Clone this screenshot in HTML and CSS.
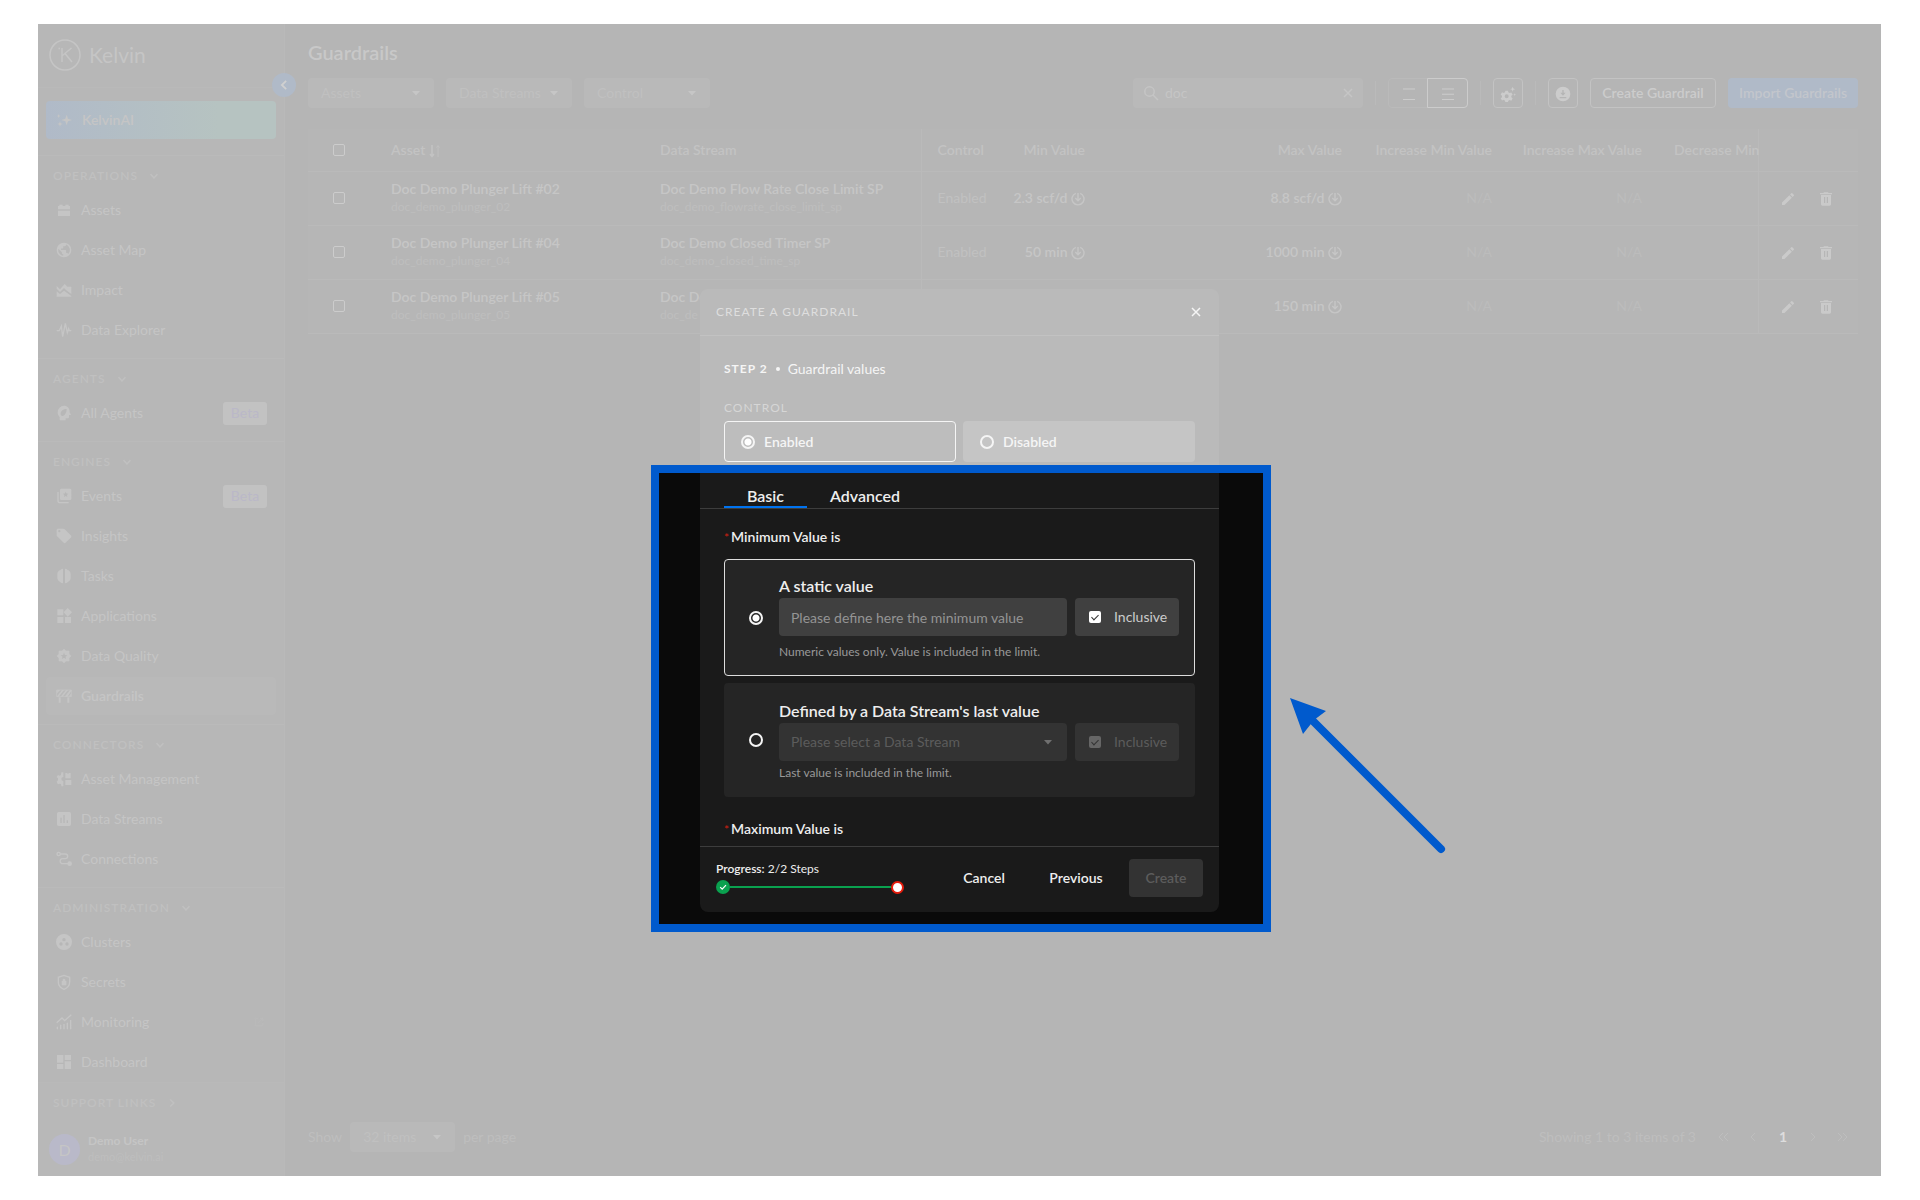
FILE: index.html
```html
<!DOCTYPE html>
<html lang="en">
<head>
    <meta charset="UTF-8">
    <meta name="viewport" content="width=device-width, initial-scale=1.0">
    <title>Guardrails - Kelvin</title>
    <link rel="stylesheet" href="styles.css">
</head>
<body>
    <!-- Shared icons -->
    <svg class="sprite" aria-hidden="true">
        <symbol id="chevron" viewBox="0 0 10 10"><path d="M1.5 3.2 5 6.8 8.500 3.200" fill="none" stroke="currentColor" stroke-width="1.500"/></symbol>
        <symbol id="caret" viewBox="0 0 10 10"><path d="M1 3h8L5 7.500z" fill="currentColor"/></symbol>
        <symbol id="close" viewBox="0 0 10 10"><path d="M1 1l8 8M9 1L1 9" fill="none" stroke="currentColor" stroke-width="1.500"/></symbol>
        <symbol id="down-circle" viewBox="0 0 14 14"><path d="M4.800 1.300a6 6 0 1 0 4.400 0M7 1v7M4.300 6 7 8.700 9.700 6" fill="none" stroke="currentColor" stroke-width="1.400"/></symbol>
        <symbol id="edit" viewBox="0 0 24 24"><path d="M3 17.250V21h3.750L17.810 9.940l-3.750-3.750zM20.710 7.040a1 1 0 0 0 0-1.410l-2.340-2.340a1 1 0 0 0-1.410 0l-1.830 1.830 3.750 3.750z" fill="currentColor"/></symbol>
        <symbol id="trash" viewBox="0 0 24 24"><path fill-rule="evenodd" d="M3 3h5l1-1h6l1 1h5v2H3zM4.500 6h15v14a2 2 0 0 1-2 2h-11a2 2 0 0 1-2-2zM9 9v9h1.800V9zm4.200 0v9H15V9z" fill="currentColor"/></symbol>
    </svg>

    <div class="app">
        <aside class="sidebar">
            <div class="brand">
                <svg class="brand-mark" viewBox="0 0 32 32" fill="none" stroke="currentColor" stroke-width="1.500"><circle cx="16" cy="16" r="15"/><path d="M13 9v14M22.500 9 13.500 16.500M16 14.500l7 8.500M9.500 9.500h1.500"/></svg>
                <span>Kelvin</span>
            </div>
            <button class="collapse" aria-label="Collapse menu"><svg viewBox="0 0 10 10"><use href="#chevron"/></svg></button>
            <div class="promo">
                <a href="#" class="kelvin-ai">
                    <svg viewBox="0 0 24 24" fill="currentColor"><path d="M16 4l2 6 6 2-6 2-2 6-2-6-6-2 6-2zM4 3l.8 2.200L7 6l-2.200.8L4 9l-.8-2.200L1 6l2.200-.8zM6 14l1 3 3 1-3 1-1 3-1-3-3-1 3-1z"/></svg>
                    KelvinAI
                </a>
            </div>
            <nav class="menu">
                <section>
                    <button class="group">Operations <svg><use href="#chevron"/></svg></button>
                    <a href="#"><svg viewBox="0 0 24 24"><path d="M3 11V6h2V4h5v2h4V4h5v2h2v5zM3 13h18v8H3z"/></svg>Assets</a>
                    <a href="#"><svg viewBox="0 0 24 24"><path d="M12 1a11 11 0 1 0 0 22 11 11 0 0 0 0-22zm-1.200 19.700A8.700 8.700 0 0 1 3.600 10l5.200 5.200v1.200c0 1.200 1 2.200 2.200 2.200zm7.600-2.800a2.200 2.200 0 0 0-2.100-1.500h-1.100v-3.300c0-.6-.5-1.100-1.100-1.100H7.500V9.800h2.200c.6 0 1.100-.5 1.100-1.100V6.500H13c1.200 0 2.200-1 2.200-2.200v-.5a8.700 8.700 0 0 1 3.200 14.100z"/></svg>Asset Map</a>
                    <a href="#"><svg viewBox="0 0 24 24"><path d="M1 6l5 5 7-8 4 4h6v11l-8-6-3-3-6 6-5-5zM1 14l5 4 6-5 11 8v1H1z"/></svg>Impact</a>
                    <a href="#"><svg viewBox="0 0 24 24"><path d="M1 13h4l3-7 2 16 4-20 3 14 2-6 1 3h3" class="line"/></svg>Data Explorer</a>
                </section>
                <section>
                    <button class="group">Agents <svg><use href="#chevron"/></svg></button>
                    <a href="#"><svg viewBox="0 0 24 24"><path fill-rule="evenodd" d="M12 1a10 10 0 0 0-9.500 10c0 3 1 5 3 7v5h9v-3h3c1.500 0 2-1 2-2v-3h3l-2-4C21 5 17 1 12 1zm4 5c0 5-2 9-5 10-2 1-4 0-4-3 0-4 4-7 9-7z"/></svg>All Agents <span class="beta">Beta</span></a>
                </section>
                <section>
                    <button class="group">Engines <svg><use href="#chevron"/></svg></button>
                    <a href="#"><svg viewBox="0 0 24 24"><path fill-rule="evenodd" d="M8 1h13a2 2 0 0 1 2 2v13a2 2 0 0 1-2 2H8a2 2 0 0 1-2-2V3c0-1 1-2 2-2zm6.500 4.500-1.200 2.800-3 .2 2.300 2-.7 3 2.600-1.600 2.600 1.600-.7-3 2.300-2-3-.2z"/><path d="M3 6v13c0 2 1 3 3 3h13" class="line"/></svg>Events <span class="beta">Beta</span></a>
                    <a href="#"><svg viewBox="0 0 24 24"><path fill-rule="evenodd" d="M1 3c0-1 1-2 2-2h8c1 0 1.500.3 2 .8l9.500 9.500c.8.8.8 2 0 2.800l-8.200 8.200c-.8.8-2 .8-2.800 0L1.700 12.500c-.5-.5-.7-1-.7-1.500zm4 0a1.700 1.700 0 1 0 0 3.400A1.700 1.700 0 0 0 5 3z"/></svg>Insights</a>
                    <a href="#"><svg viewBox="0 0 24 24"><path d="M10.500 1v22c-3 0-4-2-4-2-3-1-4.500-4-4.500-6V9c0-3 2-5 4.500-6 0 0 1-2 4-2zM13.500 1v22c3 0 4-2 4-2 3-1 4.500-4 4.500-6V9c0-3-2-5-4.500-6 0 0-1-2-4-2z"/></svg>Tasks</a>
                    <a href="#"><svg viewBox="0 0 24 24"><path d="M2 2h9v9H2zM2 13.500h9v9H2zM13.500 13.500h9v9h-9zM17.500 0 24 6.500 17.500 13 11.500 6.500z"/></svg>Applications</a>
                    <a href="#"><svg viewBox="0 0 24 24"><path fill-rule="evenodd" d="M12 1l3 3h5v5l3 3-3 3v5h-5l-3 3-3-3H4v-5l-3-3 3-3V4h5zm0 6-1.400 3.400-3.600.3 2.700 2.300-.8 3.600 3.100-1.900 3.100 1.900-.8-3.600 2.700-2.300-3.600-.3z"/></svg>Data Quality</a>
                    <a href="#" class="active"><svg viewBox="0 0 24 24"><path d="M4 14h3v8H4zM17 14h3v8h-3zM2 3h4l-5 6V4zM9 3h3l-8 10H1zM15 3h3l-8 10H7zM21 3h2v2l-6 8h-4zM23 8v5h-4z"/><path d="M1 3h22v10H1z" class="line thin"/></svg>Guardrails</a>
                </section>
                <section>
                    <button class="group">Connectors <svg><use href="#chevron"/></svg></button>
                    <a href="#"><svg viewBox="0 0 24 24"><path d="M11 2v7a3 3 0 0 0 0 6v8H8l-.5-3-2-1-2.700 1L1 16l2-2v-3L1 9l1.800-3 2.700 1 2-1L8 2zM14 3h3v1h2V3h3v8h-8zM14 13.500h9V21h-9z"/></svg>Asset Management</a>
                    <a href="#"><svg viewBox="0 0 24 24"><path fill-rule="evenodd" d="M4 1.500h16A2.500 2.500 0 0 1 22.500 4v16a2.500 2.500 0 0 1-2.500 2.500H4A2.500 2.500 0 0 1 1.500 20V4A2.500 2.500 0 0 1 4 1.500zM6.500 10v8h2v-8zm4.500-4v12h2V6zm5 8v4h2v-4z"/></svg>Data Streams</a>
                    <a href="#"><svg viewBox="0 0 24 24"><circle cx="4" cy="4.500" r="2.500" class="line"/><circle cx="20.500" cy="19" r="3.500"/><path d="M6.500 4.500H14a3.500 3.500 0 0 1 0 7h-4a3.750 3.750 0 0 0 0 7.500h8" class="line"/></svg>Connections</a>
                </section>
                <section>
                    <button class="group">Administration <svg><use href="#chevron"/></svg></button>
                    <a href="#"><svg viewBox="0 0 24 24"><path fill-rule="evenodd" d="M12 0a12 12 0 1 0 0 24 12 12 0 0 0 0-24zm0 6a2.500 2.500 0 1 1 0 5 2.500 2.500 0 0 1 0-5zm-4.500 6.500a2.500 2.500 0 1 1 0 5 2.500 2.500 0 0 1 0-5zm9 0a2.500 2.500 0 1 1 0 5 2.500 2.500 0 0 1 0-5z"/></svg>Clusters</a>
                    <a href="#"><svg viewBox="0 0 24 24"><path d="M12 2 3.500 5v7c0 5 3.500 9 8.500 11 5-2 8.500-6 8.500-11V5z" class="line"/><path d="M8.500 10.500H10V9a2 2 0 0 1 4 0v1.500h1.500V17h-7z"/></svg>Secrets</a>
                    <a href="#"><svg viewBox="0 0 24 24"><path d="M1 13 9 6l4 4 10-9M2 19v4M7 16v7M12 15v8M17 13v10M22 9v14" class="line"/></svg>Monitoring <svg class="external" viewBox="0 0 24 24"><path d="M10 3H3v18h18v-7M14 3h7v7M21 3 10 14" class="line"/></svg></a>
                    <a href="#"><svg viewBox="0 0 24 24"><path d="M1.500 1.500h9.500V13H1.500zM13 1.500h9.500V9H13zM1.500 15H11v7.500H1.500zM13 11h9.500v11.500H13z"/></svg>Dashboard</a>
                </section>
            </nav>
            <div class="sidebar-footer">
                <button class="group closed">Support Links <svg><use href="#chevron"/></svg></button>
                <div class="user">
                    <span class="avatar">D</span>
                    <div>
                        <p class="user-name">Demo User</p>
                        <p class="user-mail">demo@kelvin.ai</p>
                    </div>
                </div>
            </div>
        </aside>

        <main class="content">
            <h1>Guardrails</h1>
            <div class="toolbar">
                <button class="filter">Assets <svg><use href="#caret"/></svg></button>
                <button class="filter">Data Streams <svg><use href="#caret"/></svg></button>
                <button class="filter">Control <svg><use href="#caret"/></svg></button>
                <label class="search">
                    <svg viewBox="0 0 16 16" fill="none" stroke="currentColor" stroke-width="1.500"><circle cx="6.500" cy="6.500" r="4.700"/><path d="M10 10l5 5"/></svg>
                    <input type="text" value="doc" aria-label="Search">
                    <svg class="clear"><use href="#close"/></svg>
                </label>
                <span class="divider"></span>
                <div class="density">
                    <button aria-label="Comfortable rows"><svg viewBox="0 0 14 14"><path d="M1 2h12M1 12.500h12"/></svg></button>
                    <button class="selected" aria-label="Compact rows"><svg viewBox="0 0 14 14"><path d="M1 2h12M1 7.250h12M1 12.500h12"/></svg></button>
                </div>
                <span class="divider"></span>
                <button class="icon-button" aria-label="Table settings"><svg viewBox="0 0 24 24" fill="currentColor"><path fill-rule="evenodd" d="M8 7h4l.5 2.500 2 1L17 9.600l2 3.400-2 1.800v2l2 1.700-2 3.500-2.500-1-2 1.200L12 24H8l-.5-2-2-1.200-2.500 1-2-3.500 2-1.600v-2L1 13l2-3.500 2.500 1 2-1zm2 5.500a3 3 0 1 0 0 6 3 3 0 0 0 0-6zM19 1l1 2.700 2.700 1L20 5.800 19 8.500l-1-2.700-2.700-1.100 2.700-1zM22 11l.6 1.500 1.400.5-1.400.6L22 15l-.6-1.400-1.400-.6 1.400-.5z"/></svg></button>
                <span class="divider"></span>
                <button class="icon-button" aria-label="Download"><svg viewBox="0 0 24 24" fill="currentColor"><path fill-rule="evenodd" d="M12 1a11 11 0 1 0 0 22 11 11 0 0 0 0-22zm-1 5h2v4h3l-4 4.500L8 10h3zM7 16.500h10v2H7z"/></svg></button>
                <button class="outlined">Create Guardrail</button>
                <button class="primary">Import Guardrails</button>
            </div>

            <table>
                <colgroup>
                    <col class="c-check"><col class="c-asset"><col class="c-stream"><col class="c-control"><col class="c-min"><col><col class="c-inc"><col class="c-inc"><col class="c-dec"><col class="c-dec">
                </colgroup>
                <thead>
                    <tr>
                        <th class="check"><input type="checkbox" aria-label="Select all"></th>
                        <th>Asset <svg class="sort" viewBox="0 0 12 14" fill="none" stroke="currentColor"><path d="M3 1v11M1 10l2 2.500L5 10" stroke-width="1.500"/><path d="M9 13V2M7.500 3.500 9 1.500l1.500 2" opacity=".7"/></svg></th>
                        <th class="edge">Data Stream</th>
                        <th>Control</th>
                        <th class="num">Min Value</th>
                        <th class="num">Max Value</th>
                        <th class="num">Increase Min Value</th>
                        <th class="num">Increase Max Value</th>
                        <th class="edge tight">Decrease Min</th>
                        <th></th>
                    </tr>
                </thead>
                <tbody>
                    <tr>
                        <td class="check"><input type="checkbox" aria-label="Select Plunger Lift #02"></td>
                        <td><b>Doc Demo Plunger Lift #02</b><small>doc_demo_plunger_02</small></td>
                        <td class="edge"><b>Doc Demo Flow Rate Close Limit SP</b><small>doc_demo_flowrate_close_limit_sp</small></td>
                        <td>Enabled</td>
                        <td class="num"><b>2.3 scf/d <svg><use href="#down-circle"/></svg></b></td>
                        <td class="num"><b>8.8 scf/d <svg><use href="#down-circle"/></svg></b></td>
                        <td class="num na">N/A</td>
                        <td class="num na">N/A</td>
                        <td class="edge"></td>
                        <td class="actions"><button aria-label="Edit"><svg><use href="#edit"/></svg></button><button aria-label="Delete"><svg><use href="#trash"/></svg></button></td>
                    </tr>
                    <tr>
                        <td class="check"><input type="checkbox" aria-label="Select Plunger Lift #04"></td>
                        <td><b>Doc Demo Plunger Lift #04</b><small>doc_demo_plunger_04</small></td>
                        <td class="edge"><b>Doc Demo Closed Timer SP</b><small>doc_demo_closed_time_sp</small></td>
                        <td>Enabled</td>
                        <td class="num"><b>50 min <svg><use href="#down-circle"/></svg></b></td>
                        <td class="num"><b>1000 min <svg><use href="#down-circle"/></svg></b></td>
                        <td class="num na">N/A</td>
                        <td class="num na">N/A</td>
                        <td class="edge"></td>
                        <td class="actions"><button aria-label="Edit"><svg><use href="#edit"/></svg></button><button aria-label="Delete"><svg><use href="#trash"/></svg></button></td>
                    </tr>
                    <tr>
                        <td class="check"><input type="checkbox" aria-label="Select Plunger Lift #05"></td>
                        <td><b>Doc Demo Plunger Lift #05</b><small>doc_demo_plunger_05</small></td>
                        <td class="edge"><b>Doc De</b><small>doc_de</small></td>
                        <td></td>
                        <td></td>
                        <td class="num"><b>150 min <svg><use href="#down-circle"/></svg></b></td>
                        <td class="num na">N/A</td>
                        <td class="num na">N/A</td>
                        <td class="edge"></td>
                        <td class="actions"><button aria-label="Edit"><svg><use href="#edit"/></svg></button><button aria-label="Delete"><svg><use href="#trash"/></svg></button></td>
                    </tr>
                </tbody>
            </table>

            <footer class="pager">
                <span>Show</span>
                <button class="filter page-size">32 items <svg><use href="#caret"/></svg></button>
                <span>per page</span>
                <span class="showing">Showing 1 to 3 items of 3</span>
                <div class="pages">
                    <button aria-label="First page"><svg viewBox="0 0 12 10"><path d="M6 1 2 5l4 4M11 1 7 5l4 4"/></svg></button>
                    <button aria-label="Previous page"><svg viewBox="0 0 12 10"><path d="M8 1 4 5l4 4"/></svg></button>
                    <button class="current">1</button>
                    <button aria-label="Next page"><svg viewBox="0 0 12 10"><path d="M4 1l4 4-4 4"/></svg></button>
                    <button aria-label="Last page"><svg viewBox="0 0 12 10"><path d="M1 1l4 4-4 4M6 1l4 4-4 4"/></svg></button>
                </div>
            </footer>
        </main>

        <div class="overlay">
            <div class="stage" role="dialog" aria-labelledby="dialogTitle">
                <div class="modal-top">
                    <header>
                        <h2 id="dialogTitle">Create a Guardrail</h2>
                        <button class="modal-close" aria-label="Close"><svg><use href="#close"/></svg></button>
                    </header>
                    <p class="step"><strong>Step 2</strong><i></i>Guardrail values</p>
                    <fieldset class="control">
                        <legend>Control</legend>
                        <label class="choice on"><input type="radio" name="control" checked>Enabled</label>
                        <label class="choice"><input type="radio" name="control">Disabled</label>
                    </fieldset>
                </div>

                <div class="spotlight">
                    <div class="modal-bottom">
                        <div class="tabs">
                            <button class="tab current">Basic</button>
                            <button class="tab">Advanced</button>
                        </div>
                        <div class="form">
                            <h3><span>*</span>Minimum Value is</h3>
                            <div class="option picked">
                                <input type="radio" name="minimum" id="static" checked>
                                <div class="option-body">
                                    <label for="static">A static value</label>
                                    <div class="fields">
                                        <input type="text" placeholder="Please define here the minimum value" aria-label="Minimum value">
                                        <label class="inclusive"><input type="checkbox" checked>Inclusive</label>
                                    </div>
                                    <p class="static-help">Numeric values only. Value is included in the limit.</p>
                                </div>
                            </div>
                            <div class="option">
                                <input type="radio" name="minimum" id="stream">
                                <div class="option-body">
                                    <label for="stream">Defined by a Data Stream's last value</label>
                                    <div class="fields disabled">
                                        <div class="select">
                                            <select disabled aria-label="Data Stream"><option>Please select a Data Stream</option></select>
                                            <svg><use href="#caret"/></svg>
                                        </div>
                                        <label class="inclusive"><input type="checkbox" checked disabled>Inclusive</label>
                                    </div>
                                    <p>Last value is included in the limit.</p>
                                </div>
                            </div>
                            <h3 class="maximum"><span>*</span>Maximum Value is</h3>
                        </div>
                        <footer class="modal-footer">
                            <div class="progress">
                                <p><b>Progress:</b> 2/2 Steps</p>
                                <div class="track">
                                    <svg class="done" viewBox="0 0 14 14"><circle cx="7" cy="7" r="7" fill="#0aa14f"/><path d="M4.200 7.200l2 2L10 5.200" fill="none" stroke="#fff" stroke-width="1.200"/></svg>
                                    <span class="bar"></span>
                                    <span class="now"></span>
                                </div>
                            </div>
                            <button class="plain">Cancel</button>
                            <button class="plain">Previous</button>
                            <button class="create" disabled>Create</button>
                        </footer>
                    </div>
                </div>

                <!-- Pointer to the highlighted part of the dialog -->
                <svg class="arrow" viewBox="0 0 160 160" fill="#005acd"><path d="M1 1l36 13-12 9-11 14z"/><path d="M24 24 152 152" stroke="#005acd" stroke-width="8" stroke-linecap="round"/></svg>
            </div>
        </div>
    </div>
</body>
</html>
```
FILE: styles.css
```css
* {
    box-sizing: border-box;
}

body {
    margin: 0;
    padding: 24px 39px 24px 38px;
    background: #ffffff;
    font-family: Lato, "Liberation Sans", sans-serif;
    font-size: 14px;
    line-height: 18px;
    color: #c5c5c5;
}

h1, h2, h3, p {
    margin: 0;
}

h1, h3, b, strong, th {
    font-weight: 600;
}

button, input, select {
    font: inherit;
    color: inherit;
}

button {
    padding: 0;
    border: none;
    background: none;
}

a {
    color: inherit;
    text-decoration: none;
}

svg {
    width: 10px;
    height: 10px;
    flex: none;
}

.sprite {
    position: absolute;
    width: 0;
    height: 0;
}

.line {
    fill: none;
    stroke: currentColor;
    stroke-width: 2;
}

.thin {
    stroke-width: 1;
}

.app {
    position: relative;
    display: flex;
    min-height: calc(100vh - 48px);
    background: #b5b5b5;
}

/* Sidebar */
.sidebar {
    position: relative;
    display: flex;
    flex-direction: column;
    width: 247px;
    background: #b7b7b7;
    border-right: 1px solid #b9b9b9;
}

.brand {
    display: flex;
    align-items: center;
    gap: 8px;
    height: 64px;
    padding: 0 11px 2px;
    border-bottom: 1px solid #b9b9b9;
    font-size: 21px;
}

.brand-mark {
    width: 32px;
    height: 32px;
}

.collapse {
    position: absolute;
    top: 49px;
    right: -12px;
    width: 24px;
    height: 24px;
    border-radius: 50%;
    background: #b0bac8;
    color: #d0d0d0;
    z-index: 1;
}

.collapse svg {
    display: block;
    width: 12px;
    height: 12px;
    margin: auto;
    transform: rotate(90deg);
}

.promo {
    padding: 13px 8px 16px;
}

.kelvin-ai {
    display: flex;
    align-items: center;
    gap: 10px;
    height: 38px;
    padding: 0 10px;
    border-radius: 4px;
    background: linear-gradient(90deg, #b0bac8, #b6c3c1 75%);
    font-weight: 600;
}

.kelvin-ai svg {
    width: 16px;
    height: 16px;
}

.menu {
    flex: 1;
}

.menu section {
    padding-bottom: 8px;
    border-top: 1px solid #bababa;
}

.menu section:last-child {
    padding-bottom: 0;
}

.group {
    display: flex;
    align-items: center;
    gap: 11px;
    width: 100%;
    height: 34px;
    padding: 5px 15px 0;
    font-size: 12px;
    font-weight: 600;
    letter-spacing: 1px;
    text-transform: uppercase;
    color: #c0c0c0;
}

.closed svg {
    transform: rotate(-90deg);
}

.menu a {
    display: flex;
    align-items: center;
    gap: 9px;
    height: 38px;
    margin: 1px 8px;
    padding: 0 9px 0 10px;
    border-radius: 4px;
}

.menu section a + a {
    margin-top: 2px;
}

.menu a svg {
    width: 16px;
    height: 16px;
    fill: currentColor;
}

.menu .active {
    background: #b9b9b9;
    font-weight: 600;
}

.menu a .external {
    width: 10px;
    height: 10px;
    margin-left: auto;
    margin-right: 3px;
    color: #bababa;
}

.beta {
    width: 44px;
    height: 23px;
    margin-left: auto;
    border-radius: 3px;
    background: #c2c2c2;
    color: #bab8c8;
    line-height: 22px;
    text-align: center;
}

.sidebar-footer {
    height: 94px;
    border-top: 1px solid #b9b9b9;
    background: #b8b8b8;
}

.user {
    display: flex;
    align-items: center;
    gap: 8px;
    padding: 16px 11px 0;
    font-size: 12px;
    line-height: 16px;
}

.avatar {
    width: 31px;
    height: 31px;
    border-radius: 50%;
    background: #b9b9c9;
    font-size: 16px;
    line-height: 31px;
    text-align: center;
}

.user-name {
    font-weight: bold;
}

.user-mail {
    font-size: 11px;
    color: #bebebe;
}

/* Main area */
.content {
    display: flex;
    flex-direction: column;
    flex: 1;
    min-width: 0;
    padding: 16px 23px 24px;
}

h1 {
    font-size: 20px;
    line-height: 24px;
    color: #c8c8c8;
}

.toolbar {
    display: flex;
    align-items: center;
    gap: 12px;
    margin: 14px 0 21px;
}

.filter {
    display: flex;
    align-items: center;
    justify-content: space-between;
    width: 126px;
    height: 30px;
    padding: 0 13px;
    border-radius: 4px;
    background: #b9b9b9;
    color: #c0c0c0;
}

.filter svg {
    color: #c6c6c6;
}

.search {
    display: flex;
    align-items: center;
    gap: 6px;
    width: 230px;
    height: 30px;
    margin-left: auto;
    padding: 0 10px;
    border-radius: 4px;
    background: #b9b9b9;
}

.search svg {
    width: 16px;
    height: 16px;
}

.search .clear {
    width: 10px;
    height: 10px;
}

.search input {
    flex: 1;
    min-width: 0;
    padding: 0;
    border: none;
    outline: none;
    background: none;
}

.divider {
    width: 1px;
    height: 24px;
    background: #bababa;
}

.density {
    display: flex;
    border: 1px solid #bababa;
    border-radius: 4px;
}

.density button {
    width: 39px;
    height: 28px;
}

.density svg {
    width: 14px;
    height: 14px;
    stroke: #cccccc;
    vertical-align: -3px;
}

.density .selected {
    width: 41px;
    height: 30px;
    margin: -1px;
    border: 1px solid #cccccc;
    border-radius: 0 4px 4px 0;
}

.icon-button {
    width: 30px;
    height: 30px;
    border: 1px solid #c3c3c3;
    border-radius: 4px;
    color: #cccccc;
}

.icon-button svg {
    width: 16px;
    height: 16px;
    vertical-align: -4px;
}

.outlined, .primary {
    width: 126px;
    height: 30px;
    border: 1px solid #c3c3c3;
    border-radius: 4px;
    font-weight: 600;
    color: #cccccc;
}

.primary {
    width: 130px;
    border: none;
    background: #b0bac8;
    color: #c3c6cc;
}

table {
    width: 100%;
    table-layout: fixed;
    border-collapse: collapse;
    background: #b6b6b6;
}

.c-check { width: 67px; }
.c-asset { width: 269px; }
.c-stream { width: 277px; }
.c-control { width: 79px; }
.c-min { width: 101px; }
.c-inc { width: 150px; }
.c-dec { width: 100px; }

th, td {
    height: 54px;
    padding: 0 16px;
    border-bottom: 1px solid #bababa;
    text-align: left;
    white-space: nowrap;
    color: #c1c1c1;
}

th {
    height: 42px;
    color: #c3c3c3;
}

td b {
    color: #c6c6c6;
}

.edge {
    border-right: 1px solid #bababa;
}

.tight {
    padding-right: 0;
}

.num {
    padding-left: 0;
    text-align: right;
}

.na {
    color: #bcbcbc;
}

.sort {
    width: 12px;
    height: 14px;
    vertical-align: -3px;
}

td small {
    display: block;
    font-size: 12px;
    color: #bebebe;
}

td b svg {
    width: 14px;
    height: 14px;
    vertical-align: -3px;
}

.check {
    padding: 0 25px;
}

input[type="checkbox"], input[type="radio"] {
    appearance: none;
    display: block;
    flex: none;
    width: 12px;
    height: 12px;
    margin: 0;
    border: 1px solid #cccccc;
    border-radius: 2px;
}

.actions button {
    width: 16px;
    height: 16px;
    margin: 0 17px 0 5px;
    vertical-align: middle;
    color: #cacaca;
}

.actions svg {
    width: 16px;
    height: 16px;
    display: block;
}

.pager {
    display: flex;
    align-items: center;
    gap: 8px;
    margin-top: auto;
    color: #bebebe;
}

.page-size {
    width: 105px;
}

.showing {
    margin-left: auto;
    margin-right: 4px;
}

.pages {
    display: flex;
}

.pages button {
    width: 30px;
    height: 30px;
}

.pages svg {
    width: 12px;
    height: 10px;
    fill: none;
    stroke: currentColor;
}

.pages .current {
    color: #dddddd;
    font-weight: bold;
}

/* Dialog */
.overlay {
    position: absolute;
    top: 265px;
    left: 3px;
    right: 0;
    display: flex;
    justify-content: center;
}

.stage {
    position: relative;
    width: 620px;
}

.modal-top {
    height: 176px;
    margin: 0 52px 0 49px;
    border-radius: 8px 8px 0 0;
    background: #bababa;
    color: #f5f5f5;
}

.modal-top header {
    display: flex;
    align-items: center;
    justify-content: space-between;
    height: 47px;
    padding: 0 18px 0 16px;
    border-bottom: 1px solid #c2c2c2;
}

h2 {
    font-size: 12px;
    font-weight: normal;
    letter-spacing: 1px;
    text-transform: uppercase;
    color: #dedede;
}

.modal-close svg {
    display: block;
}

.step {
    display: flex;
    align-items: center;
    padding: 24px 24px 0;
}

.step strong {
    font-size: 12px;
    font-weight: bold;
    letter-spacing: 1px;
    text-transform: uppercase;
}

.step i {
    width: 4px;
    height: 4px;
    margin: 0 8px;
    border-radius: 50%;
    background: #f5f5f5;
}

.control {
    display: flex;
    gap: 7px;
    margin: 0;
    padding: 4px 24px 0;
    border: none;
}

.control legend {
    padding: 21px 0 0;
    font-size: 12px;
    letter-spacing: 1px;
    text-transform: uppercase;
    color: #d6d6d6;
}

.choice {
    display: flex;
    align-items: center;
    gap: 9px;
    flex: 1;
    height: 41px;
    padding: 0 17px;
    border-radius: 4px;
    background: #c5c5c5;
    font-weight: 600;
}

.choice.on {
    padding: 0 16px;
    border: 1px solid #f5f5f5;
    background: #bdbdbd;
}

input[type="radio"] {
    width: 14px;
    height: 14px;
    border: 2px solid #f5f5f5;
    border-radius: 50%;
}

input[type="radio"]:checked {
    background: radial-gradient(circle, #ffffff 3px, transparent 4px);
}

.spotlight {
    padding: 0 44px 12px 41px;
    border: 8px solid #005acd;
    background: #0a0a0a;
}

.modal-bottom {
    border-radius: 0 0 8px 8px;
    background: #1a1a1a;
    color: #eeeeee;
}

.tabs {
    display: flex;
    height: 36px;
    padding: 0 24px;
    border-bottom: 1px solid #3d3d3d;
}

.tab {
    padding: 12px 23px 0;
    border-bottom: 2px solid transparent;
    font-size: 16px;
    font-weight: 600;
    line-height: 20px;
}

.tab.current {
    border-color: #0073f0;
}

.form {
    height: 337px;
    padding: 19px 24px 0;
    overflow: hidden;
}

h3 {
    font-size: 14px;
    line-height: 18px;
}

h3 span {
    margin-right: 2px;
    font-size: 12px;
    font-weight: normal;
    color: #d32011;
}

.option {
    display: flex;
    align-items: center;
    gap: 16px;
    height: 114px;
    margin-top: 7px;
    padding: 0 16px 0 25px;
    border-radius: 4px;
    background: #252525;
}

.option.picked {
    height: 117px;
    margin-top: 12px;
    padding: 0 15px 0 24px;
    border: 1px solid #dddddd;
}

.option-body {
    flex: 1;
    font-size: 16px;
    font-weight: 600;
}

.option-body > label {
    display: block;
    line-height: 24px;
}

.fields {
    display: flex;
    gap: 8px;
    font-size: 14px;
    font-weight: normal;
}

.fields input[type="text"], .select {
    flex: 1;
    min-width: 0;
    height: 38px;
    padding: 0 12px;
    border: none;
    border-radius: 4px;
    background: #404040;
}

.fields ::placeholder {
    color: #949494;
    opacity: 1;
}

.select {
    display: flex;
    align-items: center;
}

.select select {
    flex: 1;
    appearance: none;
    padding: 0;
    border: none;
    background: none;
    color: inherit;
    opacity: 1;
}

.select svg {
    margin-right: 2px;
    color: #707070;
}

.inclusive {
    display: flex;
    align-items: center;
    gap: 13px;
    width: 104px;
    height: 38px;
    padding: 0 14px;
    border-radius: 4px;
    background: #404040;
    color: #cccccc;
}

.inclusive input {
    position: relative;
    border: none;
    background: #ffffff;
}

.inclusive input::after {
    content: "";
    position: absolute;
    top: 2px;
    left: 4px;
    width: 3px;
    height: 6px;
    border: solid #333333;
    border-width: 0 1px 1px 0;
    transform: rotate(45deg);
}

.disabled .select, .disabled .inclusive {
    background: #333333;
    color: #5c5c5c;
}

.disabled .inclusive input {
    background: #666666;
}

.option-body p {
    margin-top: 3px;
    font-size: 12px;
    font-weight: normal;
    color: #999999;
}

.option-body .static-help {
    margin-top: 7px;
}

.maximum {
    margin-top: 23px;
}

.modal-footer {
    display: flex;
    align-items: center;
    height: 66px;
    padding: 0 16px 4px;
    border-top: 1px solid #3d3d3d;
}

.progress {
    width: 188px;
    margin-right: 36px;
    font-size: 12px;
    line-height: 16px;
}

.track {
    display: flex;
    align-items: center;
    margin-top: 3px;
}

.done {
    width: 14px;
    height: 14px;
}

.bar {
    flex: 1;
    height: 2px;
    background: #0aa14f;
}

.now {
    width: 13px;
    height: 13px;
    border: 2px solid #e51c0c;
    border-radius: 50%;
    background: #ffffff;
}

.plain {
    width: 88px;
    height: 38px;
    margin-right: 4px;
    font-weight: 600;
}

.create {
    width: 74px;
    height: 38px;
    margin-left: auto;
    border-radius: 4px;
    background: #333333;
    font-weight: 600;
    color: #5c5c5c;
}

.arrow {
    position: absolute;
    top: 408px;
    left: 638px;
    width: 160px;
    height: 160px;
}
```
